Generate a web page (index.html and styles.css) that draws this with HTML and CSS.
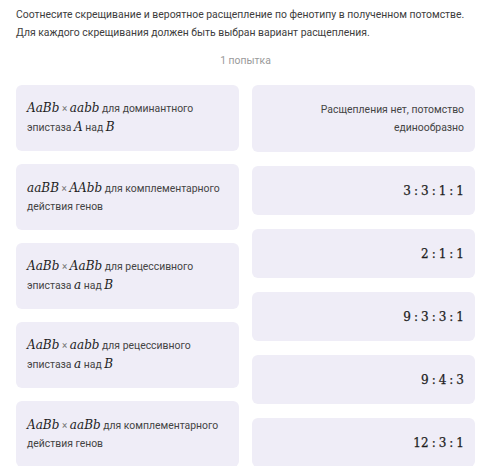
FILE: index.html
```html
<!DOCTYPE html>
<html lang="ru">
<head>
<meta charset="utf-8">
<link rel="stylesheet" href="styles.css">
</head>
<body>
<div class="page">
  <p class="intro">Соотнесите скрещивание и вероятное расщепление по фенотипу в полученном потомстве.<br>Для каждого скрещивания должен быть выбран вариант расщепления.</p>
  <div class="tries">1 попытка</div>
  <div class="cols">
    <div class="col left">
      <div class="card"><div><span class="m">AaBb</span> <span class="x">×</span> <span class="m">aabb</span> для доминантного<br>эпистаза <span class="m">A</span> над <span class="m">B</span></div></div>
      <div class="card"><div><span class="m">aaBB</span> <span class="x">×</span> <span class="m">AAbb</span> для комплементарного<br>действия генов</div></div>
      <div class="card"><div><span class="m">AaBb</span> <span class="x">×</span> <span class="m">AaBb</span> для рецессивного<br>эпистаза <span class="m">a</span> над <span class="m">B</span></div></div>
      <div class="card"><div><span class="m">AaBb</span> <span class="x">×</span> <span class="m">aabb</span> для рецессивного<br>эпистаза <span class="m">a</span> над <span class="m">B</span></div></div>
      <div class="card"><div><span class="m">AaBb</span> <span class="x">×</span> <span class="m">aaBb</span> для комплементарного<br>действия генов</div></div>
    </div>
    <div class="col right">
      <div class="card tall"><div>Расщепления нет, потомство<br>единообразно</div></div>
      <div class="card short"><span class="n">3<i>:</i>3<i>:</i>1<i>:</i>1</span></div>
      <div class="card short"><span class="n">2<i>:</i>1<i>:</i>1</span></div>
      <div class="card short"><span class="n">9<i>:</i>3<i>:</i>3<i>:</i>1</span></div>
      <div class="card short"><span class="n">9<i>:</i>4<i>:</i>3</span></div>
      <div class="card short"><span class="n">12<i>:</i>3<i>:</i>1</span></div>
    </div>
  </div>
</div>
</body>
</html>
```
FILE: styles.css
```css
html, body {
  margin: 0;
  padding: 0;
  background: #ffffff;
  overflow: hidden;
}
.page {
  width: 459px;
  padding: 6px 25px 0 16px;
  font-family: Roboto, "Liberation Sans", sans-serif;
  font-size: 10.4px;
  color: #3d3d3d;
}
.intro {
  margin: 0;
  line-height: 18px;
  white-space: nowrap;
}
.tries {
  margin-top: 10px;
  text-align: center;
  color: #9a9a9a;
  line-height: 18px;
}
.cols {
  margin-top: 15px;
  display: flex;
  gap: 13px;
}
.col {
  flex: 1;
  display: flex;
  flex-direction: column;
}
.left { gap: 13px; }
.right { gap: 14px; }
.card {
  background: #efedf7;
  border-radius: 6px;
  display: flex;
  align-items: center;
  padding: 0 11px;
  line-height: 18px;
  color: #444;
  white-space: nowrap;
}
.left .card { height: 66px; }
.right .card { justify-content: flex-end; text-align: right; }
.right .tall { height: 67px; }
.right .short { height: 49px; }
.m {
  font-family: "DejaVu Serif", "Liberation Serif", serif;
  font-style: italic;
  font-size: 12px;
  color: #1e1e1e;
}
.x {
  font-size: 10px;
  color: #777;
}
.n {
  font-family: "DejaVu Serif", "Liberation Serif", serif;
  font-size: 12px;
  color: #1e1e1e;
  -webkit-text-stroke: 0.25px #1e1e1e;
}
.n i {
  font-style: normal;
  padding: 0 3px;
}
```
